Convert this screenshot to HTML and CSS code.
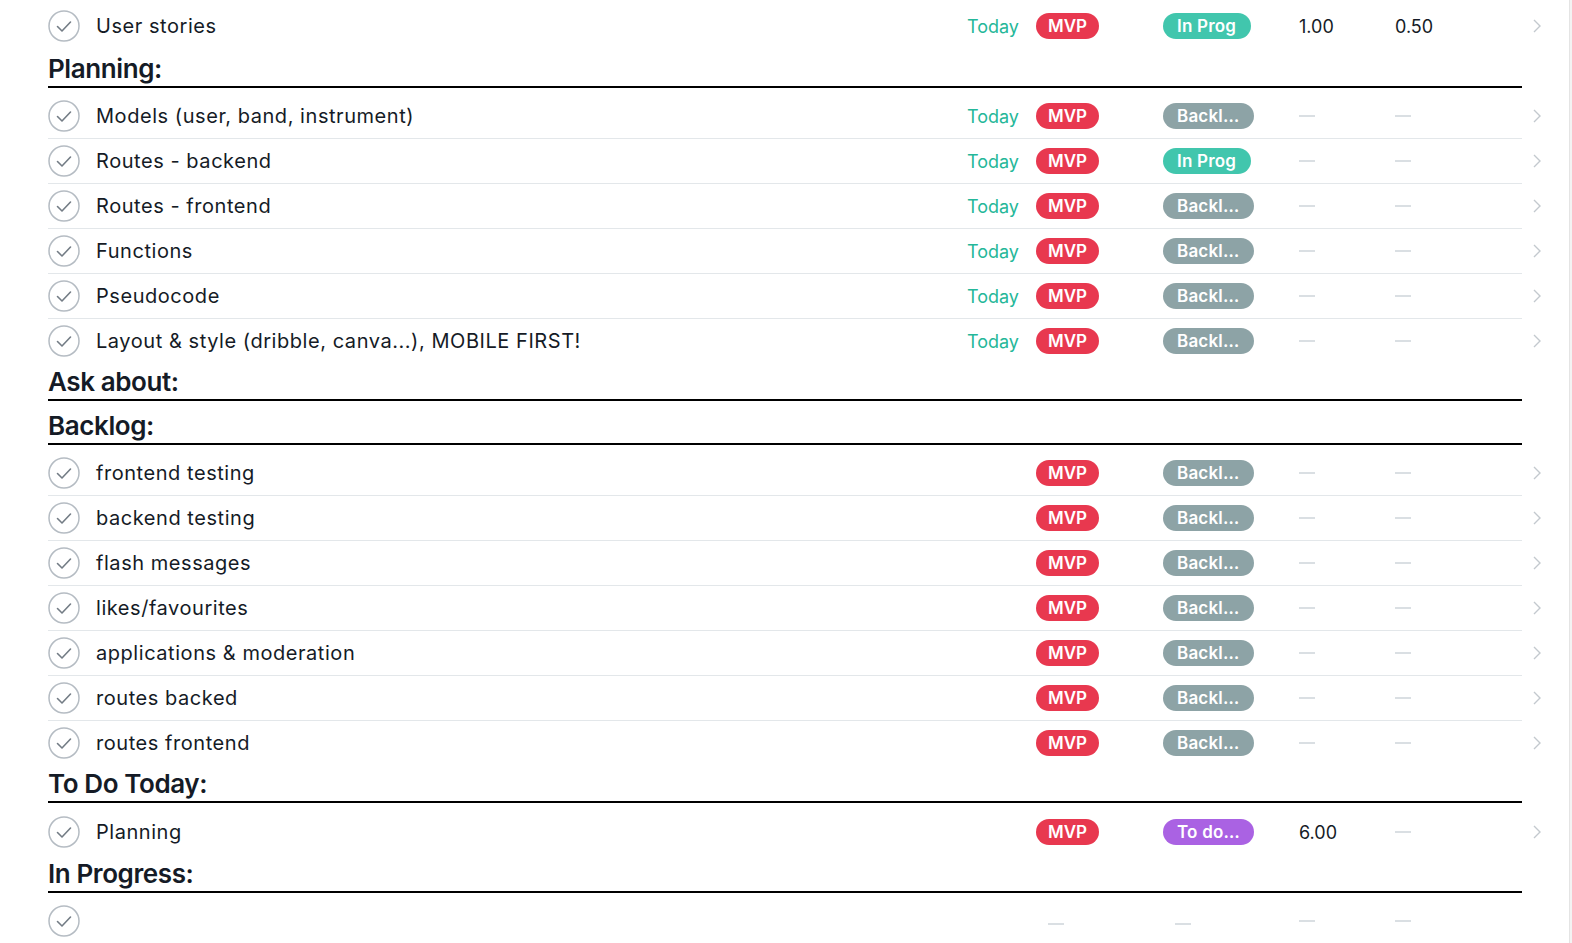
FILE: index.html
```html
<!DOCTYPE html>
<html lang="en">
<head>
<meta charset="utf-8">
<title>Task list</title>
<link rel="stylesheet" href="styles.css">
</head>
<body>
<div class="page">
  <main class="board">
    <div class="list list-top">
      <div class="row row-first">
        <span class="check"><svg viewBox="0 0 32 32" width="32" height="32"><circle cx="16" cy="16" r="15" class="ring"/><path d="M9.5 16.5 L14 21 L22.5 12" class="tick"/></svg></span>
        <span class="name">User stories</span>
        <span class="date">Today</span>
        <span class="cell"><span class="badge red">MVP</span></span>
        <span class="cell"><span class="badge status teal">In Prog</span></span>
        <span class="cell num">1.00</span>
        <span class="cell num">0.50</span>
        <span></span>
        <span class="chev"><svg viewBox="0 0 10 16" width="10" height="16"><path d="M2 2 L8 8 L2 14"/></svg></span>
      </div>
    </div>

    <section class="section">
      <h2 class="heading">Planning:</h2>
      <div class="list">
        <div class="row">
          <span class="check"><svg viewBox="0 0 32 32" width="32" height="32"><circle cx="16" cy="16" r="15" class="ring"/><path d="M9.5 16.5 L14 21 L22.5 12" class="tick"/></svg></span>
          <span class="name">Models (user, band, instrument)</span>
          <span class="date">Today</span>
          <span class="cell"><span class="badge red">MVP</span></span>
          <span class="cell"><span class="badge status gray">Backl…</span></span>
          <span class="cell"><span class="dash"></span></span>
          <span class="cell"><span class="dash"></span></span>
          <span></span>
          <span class="chev"><svg viewBox="0 0 10 16" width="10" height="16"><path d="M2 2 L8 8 L2 14"/></svg></span>
        </div>
        <div class="row">
          <span class="check"><svg viewBox="0 0 32 32" width="32" height="32"><circle cx="16" cy="16" r="15" class="ring"/><path d="M9.5 16.5 L14 21 L22.5 12" class="tick"/></svg></span>
          <span class="name">Routes - backend</span>
          <span class="date">Today</span>
          <span class="cell"><span class="badge red">MVP</span></span>
          <span class="cell"><span class="badge status teal">In Prog</span></span>
          <span class="cell"><span class="dash"></span></span>
          <span class="cell"><span class="dash"></span></span>
          <span></span>
          <span class="chev"><svg viewBox="0 0 10 16" width="10" height="16"><path d="M2 2 L8 8 L2 14"/></svg></span>
        </div>
        <div class="row">
          <span class="check"><svg viewBox="0 0 32 32" width="32" height="32"><circle cx="16" cy="16" r="15" class="ring"/><path d="M9.5 16.5 L14 21 L22.5 12" class="tick"/></svg></span>
          <span class="name">Routes - frontend</span>
          <span class="date">Today</span>
          <span class="cell"><span class="badge red">MVP</span></span>
          <span class="cell"><span class="badge status gray">Backl…</span></span>
          <span class="cell"><span class="dash"></span></span>
          <span class="cell"><span class="dash"></span></span>
          <span></span>
          <span class="chev"><svg viewBox="0 0 10 16" width="10" height="16"><path d="M2 2 L8 8 L2 14"/></svg></span>
        </div>
        <div class="row">
          <span class="check"><svg viewBox="0 0 32 32" width="32" height="32"><circle cx="16" cy="16" r="15" class="ring"/><path d="M9.5 16.5 L14 21 L22.5 12" class="tick"/></svg></span>
          <span class="name">Functions</span>
          <span class="date">Today</span>
          <span class="cell"><span class="badge red">MVP</span></span>
          <span class="cell"><span class="badge status gray">Backl…</span></span>
          <span class="cell"><span class="dash"></span></span>
          <span class="cell"><span class="dash"></span></span>
          <span></span>
          <span class="chev"><svg viewBox="0 0 10 16" width="10" height="16"><path d="M2 2 L8 8 L2 14"/></svg></span>
        </div>
        <div class="row">
          <span class="check"><svg viewBox="0 0 32 32" width="32" height="32"><circle cx="16" cy="16" r="15" class="ring"/><path d="M9.5 16.5 L14 21 L22.5 12" class="tick"/></svg></span>
          <span class="name">Pseudocode</span>
          <span class="date">Today</span>
          <span class="cell"><span class="badge red">MVP</span></span>
          <span class="cell"><span class="badge status gray">Backl…</span></span>
          <span class="cell"><span class="dash"></span></span>
          <span class="cell"><span class="dash"></span></span>
          <span></span>
          <span class="chev"><svg viewBox="0 0 10 16" width="10" height="16"><path d="M2 2 L8 8 L2 14"/></svg></span>
        </div>
        <div class="row">
          <span class="check"><svg viewBox="0 0 32 32" width="32" height="32"><circle cx="16" cy="16" r="15" class="ring"/><path d="M9.5 16.5 L14 21 L22.5 12" class="tick"/></svg></span>
          <span class="name">Layout &amp; style (dribble, canva...), MOBILE FIRST!</span>
          <span class="date">Today</span>
          <span class="cell"><span class="badge red">MVP</span></span>
          <span class="cell"><span class="badge status gray">Backl…</span></span>
          <span class="cell"><span class="dash"></span></span>
          <span class="cell"><span class="dash"></span></span>
          <span></span>
          <span class="chev"><svg viewBox="0 0 10 16" width="10" height="16"><path d="M2 2 L8 8 L2 14"/></svg></span>
        </div>
      </div>
    </section>

    <section class="section">
      <h2 class="heading">Ask about:</h2>
      <div class="list"></div>
    </section>

    <section class="section">
      <h2 class="heading">Backlog:</h2>
      <div class="list">
        <div class="row">
          <span class="check"><svg viewBox="0 0 32 32" width="32" height="32"><circle cx="16" cy="16" r="15" class="ring"/><path d="M9.5 16.5 L14 21 L22.5 12" class="tick"/></svg></span>
          <span class="name">frontend testing</span>
          <span class="date"></span>
          <span class="cell"><span class="badge red">MVP</span></span>
          <span class="cell"><span class="badge status gray">Backl…</span></span>
          <span class="cell"><span class="dash"></span></span>
          <span class="cell"><span class="dash"></span></span>
          <span></span>
          <span class="chev"><svg viewBox="0 0 10 16" width="10" height="16"><path d="M2 2 L8 8 L2 14"/></svg></span>
        </div>
        <div class="row">
          <span class="check"><svg viewBox="0 0 32 32" width="32" height="32"><circle cx="16" cy="16" r="15" class="ring"/><path d="M9.5 16.5 L14 21 L22.5 12" class="tick"/></svg></span>
          <span class="name">backend testing</span>
          <span class="date"></span>
          <span class="cell"><span class="badge red">MVP</span></span>
          <span class="cell"><span class="badge status gray">Backl…</span></span>
          <span class="cell"><span class="dash"></span></span>
          <span class="cell"><span class="dash"></span></span>
          <span></span>
          <span class="chev"><svg viewBox="0 0 10 16" width="10" height="16"><path d="M2 2 L8 8 L2 14"/></svg></span>
        </div>
        <div class="row">
          <span class="check"><svg viewBox="0 0 32 32" width="32" height="32"><circle cx="16" cy="16" r="15" class="ring"/><path d="M9.5 16.5 L14 21 L22.5 12" class="tick"/></svg></span>
          <span class="name">flash messages</span>
          <span class="date"></span>
          <span class="cell"><span class="badge red">MVP</span></span>
          <span class="cell"><span class="badge status gray">Backl…</span></span>
          <span class="cell"><span class="dash"></span></span>
          <span class="cell"><span class="dash"></span></span>
          <span></span>
          <span class="chev"><svg viewBox="0 0 10 16" width="10" height="16"><path d="M2 2 L8 8 L2 14"/></svg></span>
        </div>
        <div class="row">
          <span class="check"><svg viewBox="0 0 32 32" width="32" height="32"><circle cx="16" cy="16" r="15" class="ring"/><path d="M9.5 16.5 L14 21 L22.5 12" class="tick"/></svg></span>
          <span class="name">likes/favourites</span>
          <span class="date"></span>
          <span class="cell"><span class="badge red">MVP</span></span>
          <span class="cell"><span class="badge status gray">Backl…</span></span>
          <span class="cell"><span class="dash"></span></span>
          <span class="cell"><span class="dash"></span></span>
          <span></span>
          <span class="chev"><svg viewBox="0 0 10 16" width="10" height="16"><path d="M2 2 L8 8 L2 14"/></svg></span>
        </div>
        <div class="row">
          <span class="check"><svg viewBox="0 0 32 32" width="32" height="32"><circle cx="16" cy="16" r="15" class="ring"/><path d="M9.5 16.5 L14 21 L22.5 12" class="tick"/></svg></span>
          <span class="name">applications &amp; moderation</span>
          <span class="date"></span>
          <span class="cell"><span class="badge red">MVP</span></span>
          <span class="cell"><span class="badge status gray">Backl…</span></span>
          <span class="cell"><span class="dash"></span></span>
          <span class="cell"><span class="dash"></span></span>
          <span></span>
          <span class="chev"><svg viewBox="0 0 10 16" width="10" height="16"><path d="M2 2 L8 8 L2 14"/></svg></span>
        </div>
        <div class="row">
          <span class="check"><svg viewBox="0 0 32 32" width="32" height="32"><circle cx="16" cy="16" r="15" class="ring"/><path d="M9.5 16.5 L14 21 L22.5 12" class="tick"/></svg></span>
          <span class="name">routes backed</span>
          <span class="date"></span>
          <span class="cell"><span class="badge red">MVP</span></span>
          <span class="cell"><span class="badge status gray">Backl…</span></span>
          <span class="cell"><span class="dash"></span></span>
          <span class="cell"><span class="dash"></span></span>
          <span></span>
          <span class="chev"><svg viewBox="0 0 10 16" width="10" height="16"><path d="M2 2 L8 8 L2 14"/></svg></span>
        </div>
        <div class="row">
          <span class="check"><svg viewBox="0 0 32 32" width="32" height="32"><circle cx="16" cy="16" r="15" class="ring"/><path d="M9.5 16.5 L14 21 L22.5 12" class="tick"/></svg></span>
          <span class="name">routes frontend</span>
          <span class="date"></span>
          <span class="cell"><span class="badge red">MVP</span></span>
          <span class="cell"><span class="badge status gray">Backl…</span></span>
          <span class="cell"><span class="dash"></span></span>
          <span class="cell"><span class="dash"></span></span>
          <span></span>
          <span class="chev"><svg viewBox="0 0 10 16" width="10" height="16"><path d="M2 2 L8 8 L2 14"/></svg></span>
        </div>
      </div>
    </section>

    <section class="section">
      <h2 class="heading">To Do Today:</h2>
      <div class="list list-today">
        <div class="row">
          <span class="check"><svg viewBox="0 0 32 32" width="32" height="32"><circle cx="16" cy="16" r="15" class="ring"/><path d="M9.5 16.5 L14 21 L22.5 12" class="tick"/></svg></span>
          <span class="name">Planning</span>
          <span class="date"></span>
          <span class="cell"><span class="badge red">MVP</span></span>
          <span class="cell"><span class="badge status purple">To do…</span></span>
          <span class="cell num">6.00</span>
          <span class="cell"><span class="dash"></span></span>
          <span></span>
          <span class="chev"><svg viewBox="0 0 10 16" width="10" height="16"><path d="M2 2 L8 8 L2 14"/></svg></span>
        </div>
      </div>
    </section>

    <section class="section">
      <h2 class="heading">In Progress:</h2>
      <div class="list">
        <div class="row">
          <span class="check"><svg viewBox="0 0 32 32" width="32" height="32"><circle cx="16" cy="16" r="15" class="ring"/><path d="M9.5 16.5 L14 21 L22.5 12" class="tick"/></svg></span>
          <span class="name"></span>
          <span class="date"></span>
          <span class="cell cell-empty"><span class="dash dash-low"></span></span>
          <span class="cell cell-empty"><span class="dash dash-low"></span></span>
          <span class="cell"><span class="dash"></span></span>
          <span class="cell"><span class="dash"></span></span>
          <span></span>
          <span></span>
        </div>
      </div>
    </section>
  </main>
  <div class="scrolltrack"></div>
</div>
</body>
</html>
```

FILE: styles.css
```css
html, body {
  margin: 0;
  padding: 0;
  overflow: hidden;
  background: #ffffff;
}

body {
  font-family: Inter, "Noto Sans", "Liberation Sans", sans-serif;
  color: #151b26;
}

.page {
  display: flex;
  width: 1572px;
  height: 943px;
}

.board {
  flex: 1;
  padding: 4px 19px 0 48px;
  min-width: 0;
}

.scrolltrack {
  width: 2px;
  border-left: 1px solid #e4e4e4;
  background: #f3f3f3;
}

.list {
  padding-top: 6px;
}

.list-top {
  padding-top: 0;
  padding-bottom: 2px;
}

.list-today {
  padding-top: 7px;
  padding-bottom: 1px;
}

.row {
  display: grid;
  grid-template-columns: 32px 1fr 76px 127px 136px 96px 96px 43px 28px;
  align-items: center;
  height: 44px;
  padding-top: 1px;
  background: linear-gradient(#e3e7ea, #e3e7ea) top left / calc(100% - 28px) 1px no-repeat;
}

.list > .row:first-child {
  padding-top: 0;
  background: none;
}

.list-top > .row-first {
  padding-top: 1px;
  background: linear-gradient(#e3e7ea, #e3e7ea) top left / calc(100% - 28px) 1px no-repeat;
}

.check {
  display: flex;
  width: 32px;
  height: 32px;
}

.check svg {
  display: block;
}

.ring {
  fill: #ffffff;
  stroke: #b5bcc3;
  stroke-width: 1.5;
}

.tick {
  fill: none;
  stroke: #737c85;
  stroke-width: 1.6;
  stroke-linecap: round;
  stroke-linejoin: round;
}

.name {
  padding-left: 16px;
  font-size: 20px;
  letter-spacing: 0.55px;
  color: #151b26;
  white-space: nowrap;
  overflow: hidden;
}

.date {
  text-align: right;
  padding-right: 5px;
  font-size: 18px;
  color: #25b799;
}

.cell {
  display: flex;
  align-items: center;
  padding-left: 12px;
}

.cell-empty {
  padding-left: 24px;
}

.num {
  font-size: 18px;
  color: #151b26;
}

.badge {
  display: inline-flex;
  align-items: center;
  height: 26px;
  padding: 0 12px;
  border-radius: 13px;
  font-size: 17px;
  font-weight: 600;
  color: #ffffff;
  white-space: nowrap;
}

.badge.status {
  padding: 0 14.5px 0 14px;
  letter-spacing: 0.2px;
}

.red { background: #e8384f; }
.teal { background: #41c6ad; }
.gray { background: #8da3a6; }
.purple { background: #aa62e3; }

.dash {
  display: block;
  width: 16px;
  height: 2px;
  background: #dadfe3;
}

.dash-low {
  margin-top: 6px;
}

.chev {
  display: flex;
  padding-left: 10px;
}

.chev svg path {
  fill: none;
  stroke: #c3c9ce;
  stroke-width: 1.4;
}

.section {
  margin: 0;
}

.heading {
  margin: 0 28px 0 0;
  height: 36px;
  line-height: 38px;
  border-bottom: 2px solid #000000;
  font-size: 26px;
  font-weight: 600;
  letter-spacing: -0.4px;
  color: #151b26;
}
```
